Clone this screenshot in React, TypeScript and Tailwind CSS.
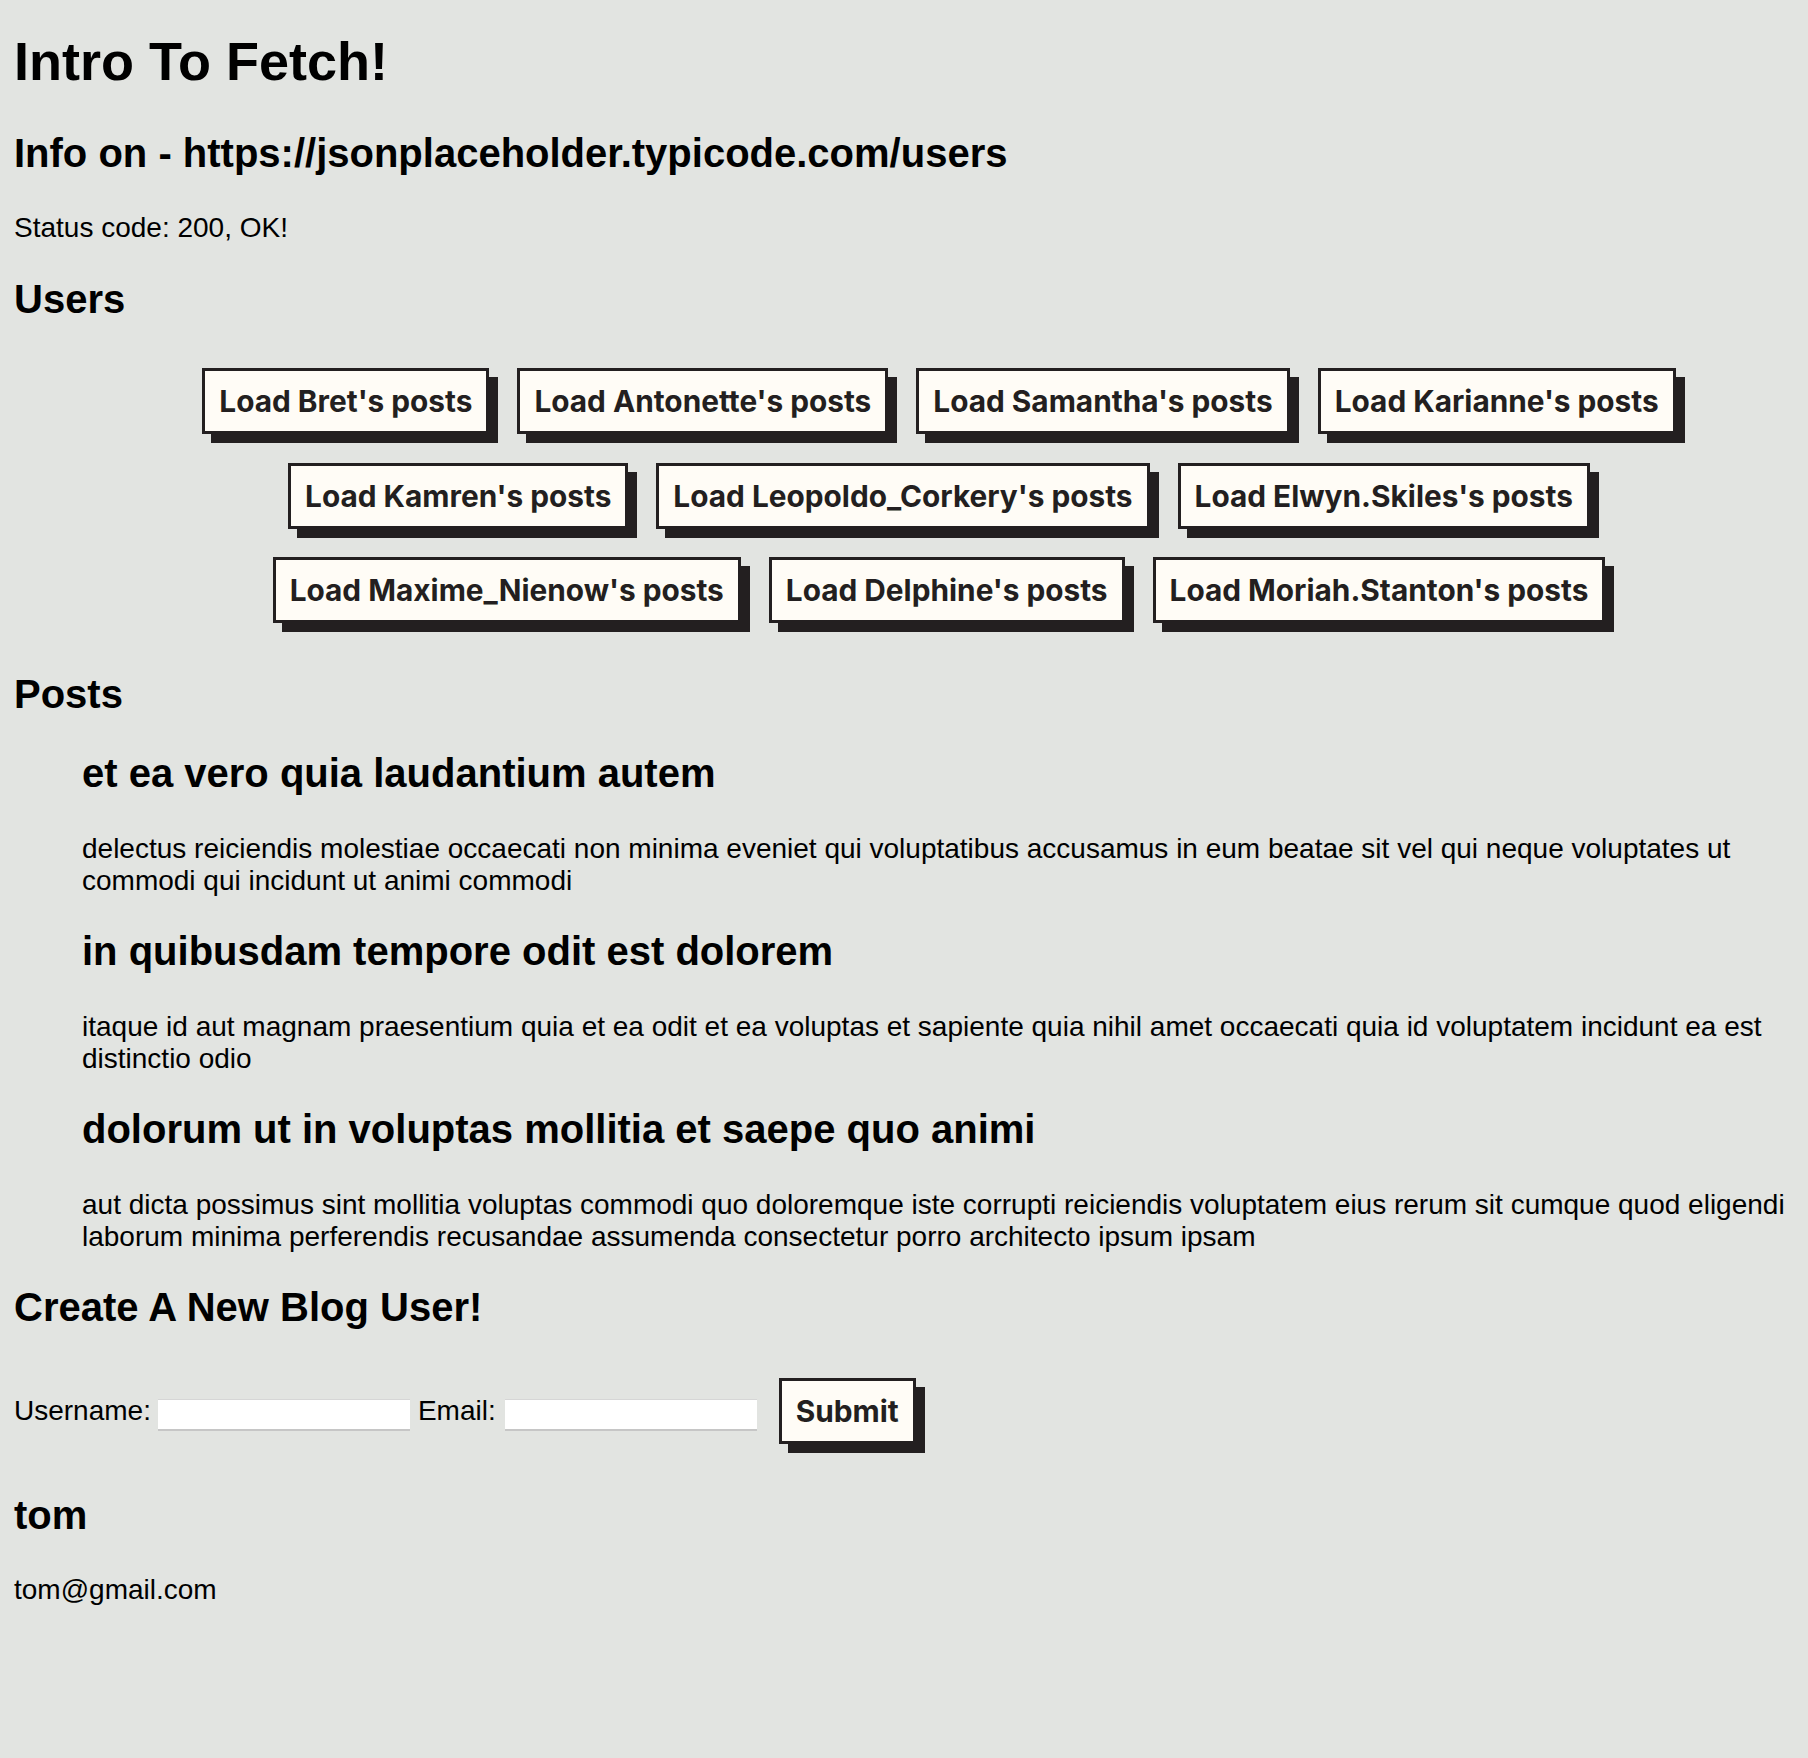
const userRows = [
  ['Bret', 'Antonette', 'Samantha', 'Karianne'],
  ['Kamren', 'Leopoldo_Corkery', 'Elwyn.Skiles'],
  ['Maxime_Nienow', 'Delphine', 'Moriah.Stanton'],
];

const posts = [
  {
    title: 'et ea vero quia laudantium autem',
    body: 'delectus reiciendis molestiae occaecati non minima eveniet qui voluptatibus accusamus in eum beatae sit vel qui neque voluptates ut commodi qui incidunt ut animi commodi',
  },
  {
    title: 'in quibusdam tempore odit est dolorem',
    body: 'itaque id aut magnam praesentium quia et ea odit et ea voluptas et sapiente quia nihil amet occaecati quia id voluptatem incidunt ea est distinctio odio',
  },
  {
    title: 'dolorum ut in voluptas mollitia et saepe quo animi',
    body: 'aut dicta possimus sint mollitia voluptas commodi quo doloremque iste corrupti reiciendis voluptatem eius rerum sit cumque quod eligendi laborum minima perferendis recusandae assumenda consectetur porro architecto ipsum ipsam',
  },
];

function ChunkyButton({ label, className = '' }: { label: string; className?: string }) {
  return (
    <button
      type="button"
      className={`h-[66px] px-[14px] flex items-center border-[3px] border-[#231f20] bg-[#fffcf6] text-[#231f20] font-['Inter',sans-serif] font-bold text-[29.8px] leading-[normal] whitespace-nowrap shadow-[9px_9px_0_0_#231f20] ${className}`}
    >
      {label}
    </button>
  );
}

function Heading({ children, className = '' }: { children: React.ReactNode; className?: string }) {
  return <h3 className={`text-[40px] font-bold leading-[normal] ${className}`}>{children}</h3>;
}

export default function App() {
  return (
    <div className="min-h-screen bg-[#e2e4e1] text-black font-['Liberation_Sans',Arial,sans-serif] text-[28px] leading-[normal] px-[14px] pt-[30px] pb-[120px]">
      <h1 className="text-[54px] font-bold leading-[normal]">Intro To Fetch!</h1>
      <Heading className="mt-[39px]">Info on - https://jsonplaceholder.typicode.com/users</Heading>
      <p className="mt-[36px]">Status code: 200, OK!</p>

      <Heading className="mt-[33px]">Users</Heading>
      {/* user buttons, list indented like a ul */}
      <div className="mt-[46px] pl-[70px] flex flex-col gap-[28.5px]">
        {userRows.map((row, i) => (
          <div key={i} className="flex justify-center gap-[28px]">
            {row.map((name) => (
              <ChunkyButton key={name} label={`Load ${name}'s posts`} />
            ))}
          </div>
        ))}
      </div>

      <Heading className="mt-[49px]">Posts</Heading>
      <div className="pl-[68px]">
        {posts.map((post, i) => (
          <div key={i} className={i === 0 ? 'mt-[33.5px]' : 'mt-[32px]'}>
            <Heading>{post.title}</Heading>
            <p className="mt-[37px]">{post.body}</p>
          </div>
        ))}
      </div>

      <Heading className="mt-[32px]">Create A New Blog User!</Heading>
      <form className="mt-[48px] flex items-center" onSubmit={(e) => e.preventDefault()}>
        <label>Username:</label>
        <input
          type="text"
          className="ml-[7px] mt-[9px] w-[252px] h-[32px] bg-white border-t border-t-[#d6d6d6] border-b-2 border-b-[#c6c6c6] outline-none"
        />
        <label className="ml-[8px]">Email:</label>
        <input
          type="text"
          className="ml-[9px] mt-[9px] w-[252px] h-[32px] bg-white border-t border-t-[#d6d6d6] border-b-2 border-b-[#c6c6c6] outline-none"
        />
        <ChunkyButton label="Submit" className="ml-[22px] h-[64px]" />
      </form>

      <Heading className="mt-[49px]">tom</Heading>
      <p className="mt-[36px]">tom@gmail.com</p>
    </div>
  );
}
